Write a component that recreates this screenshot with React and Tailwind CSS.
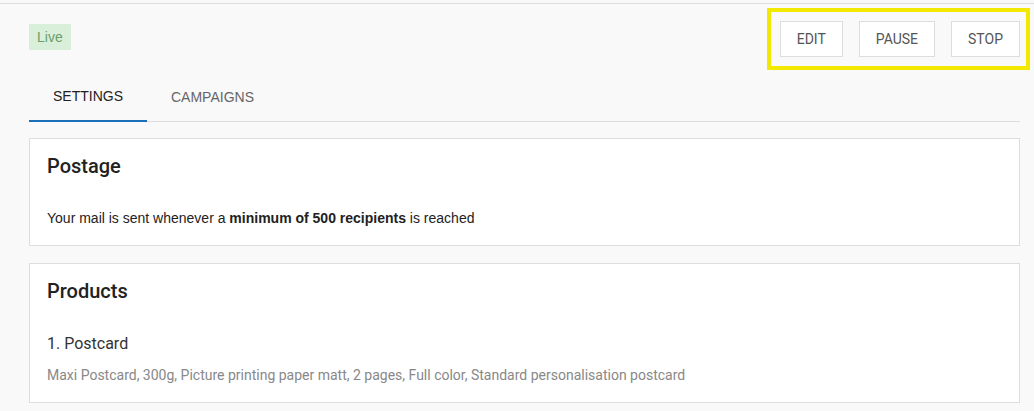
import React from "react";

const roboto = { fontFamily: "Roboto, 'Liberation Sans', sans-serif" };

const Card = ({ className, children }) => (
    <div className={`bg-white border border-[#dddddd] pl-[17px] pr-4 ${className}`}>{children}</div>
);

export default function App() {
    return (
        <div className="min-h-screen w-full bg-[#f9f9f9] pt-[3px] font-['Liberation_Sans',Arial,sans-serif]">
            <div className="border-t border-[#dddddd]" />

            {/* HEADER */}
            <div className="flex justify-between items-start pl-[29px] pr-1 pt-1">
                <span className="mt-[16px] h-[26px] px-[8px] flex items-center bg-[#d9efd9] text-[#6b9e6b] text-[14px]">
                    Live
                </span>
                <div className="flex gap-4 border-4 border-[#f2e800] pl-[9px] pr-[6px] pt-[9px] pb-[9px]">
                    {["EDIT", "PAUSE", "STOP"].map((label) => (
                        <button
                            key={label}
                            style={roboto}
                            className="h-[36px] px-[16px] bg-white border border-[#dddddd] text-[14px] text-[#555555]"
                        >
                            {label}
                        </button>
                    ))}
                </div>
            </div>

            {/* TABS */}
            <div className="ml-[29px] mr-[14px] mt-[3px] flex border-b border-[#dddddd] h-[49px]">
                <div className="w-[118px] pl-[24px] flex items-center text-[14px] text-[#222222] border-b-2 border-[#1a6fb8] -mb-px">
                    SETTINGS
                </div>
                <div className="pl-[24px] flex items-center text-[14px] text-[#666666]">CAMPAIGNS</div>
            </div>

            {/* POSTAGE */}
            <div className="ml-[29px] mr-[14px] mt-4 flex flex-col gap-[17px]">
                <Card className="h-[108px] pt-[13px]">
                    <h2 style={roboto} className="text-[20px] font-medium text-[#222222] leading-[28px]">
                        Postage
                    </h2>
                    <p className="mt-[28px] text-[14px] text-[#222222] leading-[20px]">
                        Your mail is sent whenever a <b>minimum of 500 recipients</b> is reached
                    </p>
                </Card>

                {/* PRODUCTS */}
                <Card className="h-[140px] pt-[13px]">
                    <h2 style={roboto} className="text-[20px] font-medium text-[#222222] leading-[28px]">
                        Products
                    </h2>
                    <p style={roboto} className="mt-[28px] text-[16px] text-[#333333] leading-[22px]">
                        1. Postcard
                    </p>
                    <p style={roboto} className="mt-[10px] text-[14px] text-[#888888] leading-[20px]">
                        Maxi Postcard, 300g, Picture printing paper matt, 2 pages, Full color, Standard personalisation postcard
                    </p>
                </Card>
            </div>
        </div>
    );
}
